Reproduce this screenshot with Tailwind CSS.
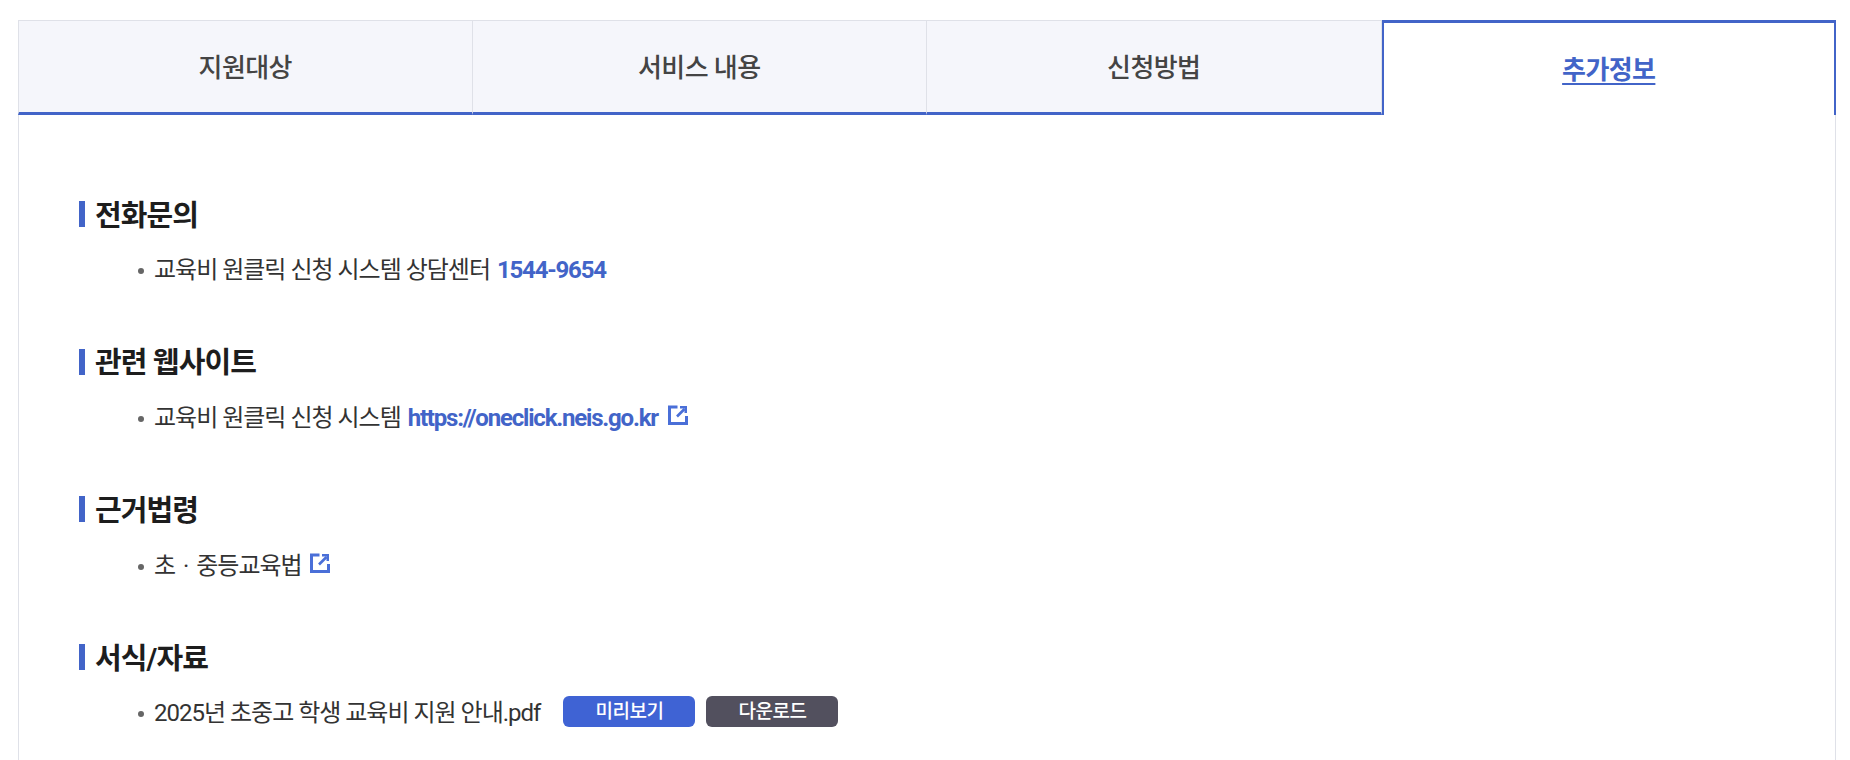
<!DOCTYPE html>
<html lang="ko">
<head>
  <meta charset="UTF-8" />
  <title>추가정보</title>
  <script src="https://cdn.jsdelivr.net/npm/@tailwindcss/browser@4"></script>
</head>
<body class="bg-white font-['Roboto','Noto_Sans_CJK_KR',sans-serif] overflow-hidden">
  <div class="h-[760px] pt-[20px] pl-[18px] pr-[14px]">
    <!-- tabs -->
    <div class="grid grid-cols-4 h-[95px] text-[26px] tracking-[-0.6px]">
      <div class="flex items-center justify-center pt-[3px] bg-[#f5f6fb] border-t border-x border-[#dfe1e8] border-b-[3px] border-b-[#4264c8] font-medium text-[#444]">지원대상</div>
      <div class="flex items-center justify-center pt-[3px] bg-[#f5f6fb] border-t border-r border-[#dfe1e8] border-b-[3px] border-b-[#4264c8] font-medium text-[#444]">서비스 내용</div>
      <div class="flex items-center justify-center pt-[3px] bg-[#f5f6fb] border-t border-r border-[#dfe1e8] border-b-[3px] border-b-[#4264c8] font-medium text-[#444]">신청방법</div>
      <div class="flex items-center justify-center pt-[3px] bg-white border-t-[3px] border-x-2 border-[#4264c8] font-bold text-[#4264c8] underline underline-offset-4">추가정보</div>
    </div>
    <!-- content -->
    <div class="h-[645px] border-x border-[#dfe1e8] pl-[60px] pt-[79px]">
      <section class="h-[147.7px]">
        <h3 class="flex items-center h-[40px] text-[29px] font-bold text-[#1d1d1d] tracking-[-0.9px] before:content-[''] before:w-[6px] before:h-[26px] before:bg-[#4264c8] before:mr-[10px]"><span class="pt-[5px]">전화문의</span></h3>
        <ul class="mt-[16.4px] pl-[75px] text-[24px] text-[#333] tracking-[-1px]">
          <li class="flex items-center h-[40px] relative before:absolute before:-left-[16px] before:top-[18px] before:w-[6px] before:h-[6px] before:rounded-full before:bg-[#666]">교육비 원클릭 신청 시스템 상담센터&nbsp;<a class="ml-[2px] font-bold text-[#4264c8] tracking-[-1.2px]">1544-9654</a></li>
        </ul>
      </section>
      <section class="h-[147.7px]">
        <h3 class="flex items-center h-[40px] text-[29px] font-bold text-[#1d1d1d] tracking-[-0.9px] before:content-[''] before:w-[6px] before:h-[26px] before:bg-[#4264c8] before:mr-[10px]"><span class="pt-[5px]">관련 웹사이트</span></h3>
        <ul class="mt-[16.4px] pl-[75px] text-[24px] text-[#333] tracking-[-1px]">
          <li class="flex items-center h-[40px] relative before:absolute before:-left-[16px] before:top-[18px] before:w-[6px] before:h-[6px] before:rounded-full before:bg-[#666]">교육비 원클릭 신청 시스템&nbsp;<a class="ml-[2px] font-bold text-[#4264c8] tracking-[-1.2px]">https://oneclick.neis.go.kr</a>
            <svg class="ml-[10px] mb-[6px]" width="20" height="20" viewBox="0 0 20 20" fill="none" stroke="#4a6fd8" stroke-width="3"><path d="M9.5 2H1.500v16.500h17V11"/><path d="M9 11.500 16.500 4" stroke-width="2.600"/><path d="M12 1h7v7h-2.500V3.500H12z" fill="#4a6fd8" stroke="none"/></svg>
          </li>
        </ul>
      </section>
      <section class="h-[147.7px]">
        <h3 class="flex items-center h-[40px] text-[29px] font-bold text-[#1d1d1d] tracking-[-0.9px] before:content-[''] before:w-[6px] before:h-[26px] before:bg-[#4264c8] before:mr-[10px]"><span class="pt-[5px]">근거법령</span></h3>
        <ul class="mt-[16.4px] pl-[75px] text-[24px] text-[#333] tracking-[-1px]">
          <li class="flex items-center h-[40px] relative [word-spacing:3px] before:absolute before:-left-[16px] before:top-[18px] before:w-[6px] before:h-[6px] before:rounded-full before:bg-[#666]">초 · 중등교육법
            <svg class="ml-[8px] mb-[6px]" width="20" height="20" viewBox="0 0 20 20" fill="none" stroke="#4a6fd8" stroke-width="3"><path d="M9.5 2H1.500v16.500h17V11"/><path d="M9 11.500 16.500 4" stroke-width="2.600"/><path d="M12 1h7v7h-2.500V3.500H12z" fill="#4a6fd8" stroke="none"/></svg>
          </li>
        </ul>
      </section>
      <section class="h-[147.7px]">
        <h3 class="flex items-center h-[40px] text-[29px] font-bold text-[#1d1d1d] tracking-[-0.9px] before:content-[''] before:w-[6px] before:h-[26px] before:bg-[#4264c8] before:mr-[10px]"><span class="pt-[5px]">서식/자료</span></h3>
        <ul class="mt-[16.4px] pl-[75px] text-[24px] text-[#333] tracking-[-1px]">
          <li class="flex items-center h-[40px] relative before:absolute before:-left-[16px] before:top-[18px] before:w-[6px] before:h-[6px] before:rounded-full before:bg-[#666]">2025년 초중고 학생 교육비 지원 안내.pdf
            <a class="ml-[23px] mb-[3px] flex items-center justify-center w-[132px] h-[31px] rounded-[6px] bg-[#3f63d4] text-white text-[19px] font-medium tracking-[-0.5px]">미리보기</a>
            <a class="ml-[11px] mb-[3px] flex items-center justify-center w-[132px] h-[31px] rounded-[6px] bg-[#52505e] text-white text-[19px] font-medium tracking-[-0.5px]">다운로드</a>
          </li>
        </ul>
      </section>
    </div>
  </div>
</body>
</html>
